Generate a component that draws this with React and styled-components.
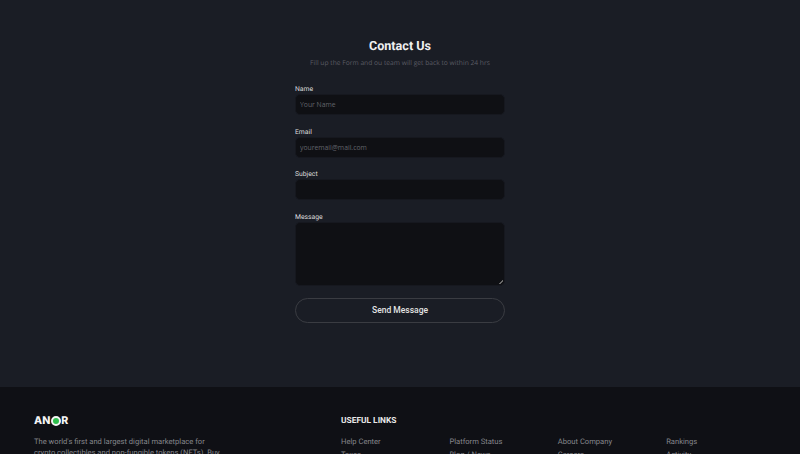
import React from 'react'
import styled, { createGlobalStyle } from 'styled-components'

const Global = createGlobalStyle`
  html, body {
    margin: 0;
    padding: 0;
    height: 454px;
    overflow: hidden;
    background: #1a1d25;
    text-rendering: geometricPrecision;
  }
  * { box-sizing: border-box; }
`

const Page = styled.div`
  font-family: Roboto, "Liberation Sans", sans-serif;
  color: #e8e8e8;
`

const ContactSection = styled.section`
  height: 387px;
  padding-top: 38px;
  background: #1a1d25;
`

const Form = styled.form`
  width: 210px;
  margin: 0 auto;
  display: flex;
  flex-direction: column;
`

const Title = styled.h1`
  margin: 0;
  font-size: 12.6px;
  line-height: 17px;
  font-weight: 700;
  text-align: center;
  color: #f0f0f0;
`

const Subtitle = styled.p`
  margin: 2px -10px 16px;
  font-family: "Open Sans", sans-serif;
  font-size: 6.7px;
  line-height: 11px;
  text-align: center;
  white-space: nowrap;
  color: #5a5c64;
`

const Field = styled.div`
  display: flex;
  flex-direction: column;
  margin-bottom: 11.7px;
`

const Label = styled.label`
  font-size: 6.8px;
  line-height: 10px;
  color: #dcdcdc;
`

const Input = styled.input`
  width: 100%;
  height: 21px;
  padding: 0 4px;
  background: #0f1014;
  border: 1px solid #16181f;
  border-radius: 5px;
  outline: none;
  font-family: "Open Sans", sans-serif;
  font-size: 6.8px;
  color: #ddd;
  &::placeholder {
    color: #62646b;
    opacity: 1;
  }
`

const Textarea = styled.textarea`
  display: block;
  width: 100%;
  height: 64px;
  padding: 4px;
  background: #0f1014;
  border: 1px solid #16181f;
  border-radius: 5px;
  outline: none;
  &::-webkit-resizer {
    background: linear-gradient(135deg, transparent 50%, #6a6a6a 50%, #6a6a6a 70%, transparent 70%) no-repeat right 1px bottom 1px / 4px 4px;
  }
`

const SendButton = styled.button`
  width: 210px;
  height: 25px;
  background: transparent;
  border: 1px solid #3a3c42;
  border-radius: 13px;
  font-family: Roboto, "Liberation Sans", sans-serif;
  font-size: 8.5px;
  font-weight: 500;
  color: #e4e4e4;
`

const Footer = styled.footer`
  height: 67px;
  overflow: hidden;
  padding: 28px 34px 0;
  background: #0f1015;
  display: flex;
`

const Brand = styled.div`
  flex: none;
  width: 307px;
`

const Logo = styled.div`
  font-family: Inter, Roboto, sans-serif;
  font-size: 10.6px;
  line-height: 12px;
  font-weight: 800;
  color: #f4f4f4;
  display: flex;
  align-items: center;
  margin-bottom: 9px;
`

const LogoDot = styled.span`
  width: 10px;
  height: 10px;
  margin: 0 0.5px;
  border-radius: 50%;
  background: #2fbf4d;
  border: 2.5px solid #f4f4f4;
`

const About = styled.p`
  margin: 0;
  width: 190px;
  font-size: 7.6px;
  line-height: 11px;
  color: #85868b;
`

const Links = styled.div`
  flex: 1;
`

const LinksTitle = styled.h4`
  margin: 0 0 9px;
  font-size: 8.4px;
  line-height: 12px;
  font-weight: 700;
  color: #e8e8e8;
`

const LinksGrid = styled.div`
  display: grid;
  grid-template-columns: repeat(4, 108.4px);
  row-gap: 1.5px;
`

const LinkItem = styled.a`
  font-size: 7.6px;
  line-height: 11px;
  color: #85868b;
`

const links = [
  'Help Center', 'Platform Status', 'About Company', 'Rankings',
  'Taxes', 'Blog / News', 'Careers', 'Activity',
]

export default function App() {
  return (
    <Page>
      <Global />
      <ContactSection>
        <Form onSubmit={(e) => e.preventDefault()}>
          <Title>Contact Us</Title>
          <Subtitle>Fill up the Form and ou team will get back to within 24 hrs</Subtitle>
          <Field>
            <Label>Name</Label>
            <Input placeholder="Your Name" />
          </Field>
          <Field>
            <Label>Email</Label>
            <Input placeholder="youremail@mail.com" />
          </Field>
          <Field>
            <Label>Subject</Label>
            <Input />
          </Field>
          <Field>
            <Label>Message</Label>
            <Textarea />
          </Field>
          <SendButton type="submit">Send Message</SendButton>
        </Form>
      </ContactSection>
      <Footer>
        <Brand>
          <Logo>AN<LogoDot />R</Logo>
          <About>
            The world's first and largest digital marketplace for crypto collectibles and
            non-fungible tokens (NFTs). Buy, sell, and discover exclusive digital items.
          </About>
        </Brand>
        <Links>
          <LinksTitle>USEFUL LINKS</LinksTitle>
          <LinksGrid>
            {links.map((l) => <LinkItem key={l}>{l}</LinkItem>)}
          </LinksGrid>
        </Links>
      </Footer>
    </Page>
  )
}
